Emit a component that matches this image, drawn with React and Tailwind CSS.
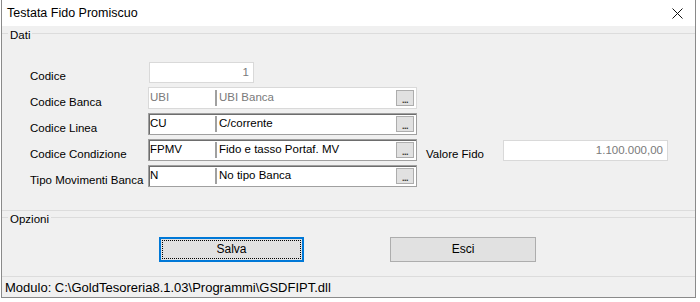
import React from 'react'

function Label({ children, className = '' }) {
  return <div className={`pt-[7px] text-[11.5px] leading-[16px] ${className}`}>{children}</div>
}

function BrowseButton() {
  return (
    <div className="w-[18px] h-[16px] mr-[2px] self-center border border-[#adadad] bg-[#e1e1e1] flex items-end justify-center pb-[2px]">
      <span className="text-[9px] font-bold leading-[6px] tracking-[-0.5px] text-[#333]">...</span>
    </div>
  )
}

function LookupField({ code, desc, disabled }) {
  const box = disabled
    ? 'border border-[#d9d9d9]'
    : 'border border-[#a0a0a0] shadow-[inset_1px_1px_0_#6d6d6d]'
  const text = disabled ? 'text-[#7a7a7a]' : 'text-black'
  return (
    <div className={`w-[269px] h-[22px] flex bg-white ${box} ${text} text-[11.5px]`}>
      <div className="w-[66px] pl-[1px] pt-px flex items-center">{code}</div>
      <div className="w-[2px] bg-[#a0a0a0] my-[2px]" />
      <div className="flex-1 pl-[2px] pt-px flex items-center">{desc}</div>
      <BrowseButton />
    </div>
  )
}

function GroupHeader({ title }) {
  return (
    <div className="h-[14px] flex items-center">
      <div className="w-[6px] h-px bg-[#dcdcdc]" />
      <span className="px-[2px] pt-[2px] text-[11.5px] leading-[14px]">{title}</span>
      <div className="flex-1 h-px bg-[#dcdcdc]" />
    </div>
  )
}

export default function App() {
  return (
    <div className="w-[700px] h-[302px] bg-white text-black font-['Liberation_Sans',Arial,sans-serif]">
      <div className="ml-px w-[695px] h-[298px] border-l border-r border-b border-[#8a8a8a] flex flex-col">
        {/* Title bar */}
        <div className="h-[29px] bg-white flex items-center justify-between pl-[5px] pr-[12px]">
          <span className="pt-[2px] text-[12.5px]">Testata Fido Promiscuo</span>
          <svg width="11" height="11" viewBox="0 0 11 11" className="mt-[2px]">
            <path d="M0.5 0.5 L10.5 10.5 M10.5 0.5 L0.5 10.5" stroke="#111" strokeWidth="1" fill="none" />
          </svg>
        </div>

        <div className="flex-1 bg-[#f0f0f0] flex flex-col">
          <div className="mt-px">
            <GroupHeader title="Dati" />
          </div>

          <div className="mt-[20px] pl-[28px] flex flex-col gap-[4px]">
            <div className="flex h-[22px]">
              <Label className="w-[118px]">Codice</Label>
              <div className="ml-px mt-px w-[105px] h-[21px] border border-[#d9d9d9] bg-white flex items-center justify-end pr-[4px] pt-px text-[11.5px] text-[#7a7a7a]">
                1
              </div>
            </div>
            <div className="flex h-[22px]">
              <Label className="w-[118px]">Codice Banca</Label>
              <LookupField code="UBI" desc="UBI Banca" disabled />
            </div>
            <div className="flex h-[22px]">
              <Label className="w-[118px]">Codice Linea</Label>
              <LookupField code="CU" desc="C/corrente" />
            </div>
            <div className="flex h-[22px]">
              <Label className="w-[118px]">Codice Condizione</Label>
              <LookupField code="FPMV" desc="Fido e tasso Portaf. MV" />
              <Label className="ml-[9px] w-[77px]">Valore Fido</Label>
              <div className="mt-px w-[165px] h-[21px] border border-[#d9d9d9] bg-white flex items-center justify-end pr-[4px] pt-px text-[11.5px] text-[#7a7a7a]">
                1.100.000,00
              </div>
            </div>
            <div className="flex h-[22px]">
              <Label className="w-[118px]">Tipo Movimenti Banca</Label>
              <LookupField code="N" desc="No tipo Banca" />
            </div>
          </div>

          <div className="mt-[23px] h-px bg-[#dcdcdc]" />
          <GroupHeader title="Opzioni" />

          <div className="mt-[12px] pl-[157px] flex">
            <button className="w-[145px] h-[25px] bg-[#e1e1e1] border border-[#0078d7] shadow-[inset_0_0_0_1px_#0078d7] outline-1 outline-dotted outline-black outline-offset-[-4px] text-[12px]">
              Salva
            </button>
            <button className="ml-[86px] w-[146px] h-[25px] bg-[#e1e1e1] border border-[#adadad] text-[12px]">
              Esci
            </button>
          </div>

          <div className="mt-[14px] h-px bg-[#dcdcdc]" />
          <div className="flex-1 flex items-center pl-[3px] pt-px text-[13px]">
            Modulo: C:\GoldTesoreria8.1.03\Programmi\GSDFIPT.dll
          </div>
        </div>
      </div>
    </div>
  )
}
